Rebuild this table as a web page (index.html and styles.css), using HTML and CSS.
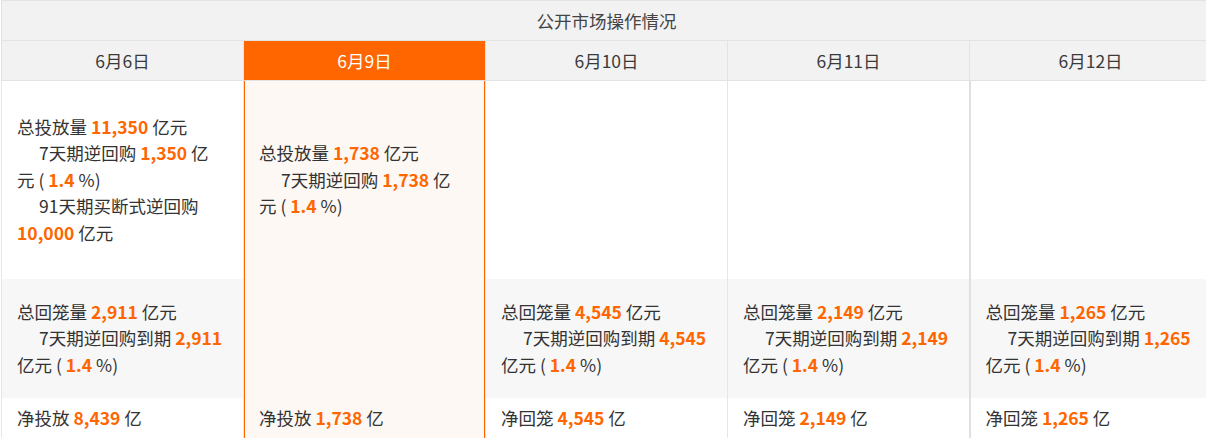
FILE: index.html
```html
<!DOCTYPE html>
<html lang="zh-CN">
<head>
<meta charset="utf-8">
<title>公开市场操作情况</title>
<link rel="stylesheet" href="styles.css">
</head>
<body>
<table class="ops">
  <colgroup>
    <col class="c"><col class="c"><col class="c"><col class="c"><col class="c">
  </colgroup>
  <thead>
    <tr class="title-row"><th colspan="5">公开市场操作情况</th></tr>
    <tr class="date-row">
      <th>6月6日</th>
      <th class="active">6月9日</th>
      <th>6月10日</th>
      <th>6月11日</th>
      <th class="last">6月12日</th>
    </tr>
  </thead>
  <tbody>
    <tr class="row-put">
      <td>总投放量 <b>11,350</b> 亿元<br><span class="ind"></span>7天期逆回购 <b>1,350</b> 亿元 ( <b>1.4</b> %)<br><span class="ind"></span>91天期买断式逆回购 <b>10,000</b> 亿元</td>
      <td class="active">总投放量 <b>1,738</b> 亿元<br><span class="ind"></span>7天期逆回购 <b>1,738</b> 亿元 ( <b>1.4</b> %)</td>
      <td></td>
      <td></td>
      <td class="last"></td>
    </tr>
    <tr class="row-back">
      <td>总回笼量 <b>2,911</b> 亿元<br><span class="ind"></span>7天期逆回购到期 <b>2,911</b> 亿元 ( <b>1.4</b> %)</td>
      <td class="active"></td>
      <td>总回笼量 <b>4,545</b> 亿元<br><span class="ind"></span>7天期逆回购到期 <b>4,545</b> 亿元 ( <b>1.4</b> %)</td>
      <td>总回笼量 <b>2,149</b> 亿元<br><span class="ind"></span>7天期逆回购到期 <b>2,149</b> 亿元 ( <b>1.4</b> %)</td>
      <td class="last">总回笼量 <b>1,265</b> 亿元<br><span class="ind"></span>7天期逆回购到期 <b>1,265</b> 亿元 ( <b>1.4</b> %)</td>
    </tr>
    <tr class="row-net">
      <td>净投放 <b>8,439</b> 亿</td>
      <td class="active">净投放 <b>1,738</b> 亿</td>
      <td>净回笼 <b>4,545</b> 亿</td>
      <td>净回笼 <b>2,149</b> 亿</td>
      <td class="last">净回笼 <b>1,265</b> 亿</td>
    </tr>
  </tbody>
</table>
</body>
</html>
```

FILE: styles.css
```css
html, body {
  margin: 0;
  padding: 0;
  background: #ffffff;
  overflow: hidden;
}

body {
  padding-left: 1px;
  font-family: "Noto Sans CJK SC", "Microsoft YaHei", sans-serif;
  font-size: 17.5px;
  color: #333333;
}

.ops {
  border-collapse: collapse;
  table-layout: fixed;
  width: 1211px;
  border: 1px solid #e3e3e3;
}

.ops .c {
  width: 242px;
}

.ops th {
  font-weight: normal;
  background: #f2f2f2;
  color: #444444;
  text-align: center;
  padding: 0;
  border: 1px solid #e3e3e3;
  line-height: 20px;
}

.title-row th {
  height: 39px;
}

.date-row th {
  height: 39px;
  color: #3a3a3a;
}

.date-row th.active {
  background: #ff6600;
  color: #ffffff;
}

.ops td {
  border-left: 1px solid #e6e6e6;
  border-right: 1px solid #e6e6e6;
  padding: 0 19px 0 15px;
  vertical-align: middle;
  line-height: 26.4px;
}

.ops td.active {
  background: #fdf8f4;
  box-shadow: inset 1px 0 0 #ff6600, inset -1px 0 0 #ff6600;
}

.ops td.last {
  border-left: 2px solid #e0e0e0;
}

.ops b {
  color: #ff6600;
  font-weight: bold;
}

.ind {
  display: inline-block;
  width: 22px;
}

.row-put td {
  height: 198px;
}

.row-back td {
  height: 119px;
  background: #f7f7f7;
}

.row-back td.active {
  background: #fdf8f4;
}

.row-net td {
  height: 40px;
  padding-top: 7px;
  vertical-align: top;
}
```
